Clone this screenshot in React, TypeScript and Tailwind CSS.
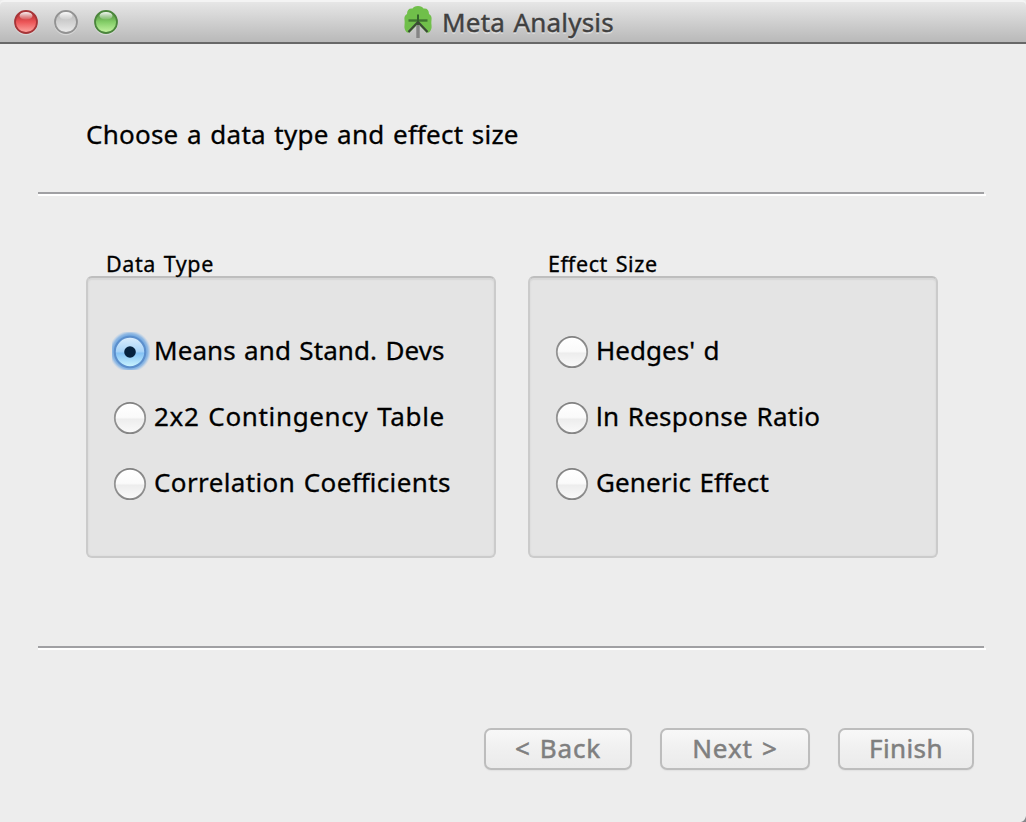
type RadioProps = { label: string; tracking: string; checked?: boolean };

function Radio({ label, tracking, checked = false }: RadioProps) {
  return (
    <div className="flex h-[66px] items-center">
      <svg className="ml-[-2px] mt-[2px] block h-10 w-10 shrink-0" viewBox="0 0 40 40">
        <defs>
          <linearGradient id="plain" x1="0" y1="0" x2="0" y2="1">
            <stop offset="0" stopColor="#fff" />
            <stop offset=".48" stopColor="#fafafa" />
            <stop offset=".54" stopColor="#ededed" />
            <stop offset="1" stopColor="#fafafa" />
          </linearGradient>
          <linearGradient id="blue" x1="0" y1="0" x2="0" y2="1">
            <stop offset="0" stopColor="#dceefd" />
            <stop offset=".48" stopColor="#a8d4f8" />
            <stop offset=".54" stopColor="#86c3f5" />
            <stop offset="1" stopColor="#cdf6ff" />
          </linearGradient>
          <linearGradient id="rim" x1="0" y1="0" x2="0" y2="1">
            <stop offset="0" stopColor="#808080" />
            <stop offset=".5" stopColor="#969696" />
            <stop offset="1" stopColor="#858585" />
          </linearGradient>
          <radialGradient id="halo" gradientUnits="userSpaceOnUse" cx="20" cy="19.5" r="21">
            <stop offset=".74" stopColor="#6aa3df" />
            <stop offset=".86" stopColor="#7fb0e3" stopOpacity=".8" />
            <stop offset="1" stopColor="#9cc4ec" stopOpacity="0" />
          </radialGradient>
        </defs>
        {checked && <path d="M2 0H40V38H2Z" fill="url(#halo)" />}
        <circle
          cx="20"
          cy="20"
          r="15.2"
          fill={checked ? "url(#blue)" : "url(#plain)"}
          stroke={checked ? "#5c8fcc" : "url(#rim)"}
          strokeWidth={checked ? 2 : 1.8}
        />
        {checked && <circle cx="20" cy="20" r="5.8" fill="#06223f" />}
      </svg>
      <span className={`-mt-[2px] ml-1 whitespace-nowrap text-[26px] leading-8 ${tracking}`}>{label}</span>
    </div>
  );
}

type GroupProps = { title: string; tracking: string; options: RadioProps[] };

function Group({ title, tracking, options }: GroupProps) {
  return (
    <section className="w-[410px]">
      <h2 className={`h-[24px] pl-5 text-[21.5px] leading-[24px] ${tracking}`}>{title}</h2>
      <div className="h-[282px] rounded-[6px] border-2 border-[#cbcbcb] border-t-[#bebebe] bg-[#e4e4e4] pl-6 pt-[40px] shadow-[inset_0_2px_1px_#d8d8d8,inset_0_0_2px_#d5d5d5]">
        {options.map((o) => (
          <Radio key={o.label} {...o} />
        ))}
      </div>
    </section>
  );
}

function Rule() {
  return (
    <div className="ml-[38px] w-[948px]">
      <div className="h-[2px] w-[946px] bg-[#a0a0a3]" />
      <div className="h-[2px] bg-white" />
    </div>
  );
}

function TrafficLight({ id, rim, top, mid, bottom }: { id: string; rim: string; top: string; mid: string; bottom: string }) {
  return (
    <svg className="block h-7 w-6" viewBox="0 0 24 28">
      <defs>
        <linearGradient id={id} x1="0" y1="0" x2="0" y2="1">
          <stop offset="0" stopColor={top} />
          <stop offset=".5" stopColor={mid} />
          <stop offset="1" stopColor={bottom} />
        </linearGradient>
        <linearGradient id={`${id}s`} x1="0" y1="0" x2="0" y2="1">
          <stop offset="0" stopColor="#fff" stopOpacity=".95" />
          <stop offset="1" stopColor="#fff" stopOpacity=".1" />
        </linearGradient>
      </defs>
      <circle cx="12" cy="15.5" r="11.8" fill="#fff" opacity=".35" />
      <circle cx="12" cy="14" r="11" fill={`url(#${id})`} stroke={rim} strokeWidth="1.8" />
      <ellipse cx="12" cy="7.8" rx="6.5" ry="3.8" fill={`url(#${id}s)`} />
    </svg>
  );
}

function LeafIcon() {
  return (
    <svg className="block h-8 w-[28px]" viewBox="0 0 28 32">
      <path
        d="M14 0C17 0 18.500 1 19.500 2.500C23 2 25 4 25 8C27 9 28 11 27.500 14C27.300 16 27.300 17 27.500 19C28 22 27 24.500 25.500 26C24.500 27 23 27 22 26L14 18L6 26C5 27 3.500 27 2.500 26C1 24.500 0 22 .5 19C.7 17 .7 16 .5 14C0 11 1 9 3 8C3 4 5 2 8.500 2.500C9.500 1 11 0 14 0Z"
        fill="#70bf4a"
      />
      <path d="M4.500 14.500H23.500" stroke="#3f7530" strokeWidth="2.400" />
      <path d="M14 8.500V19" stroke="#34632b" strokeWidth="2" />
      <path d="M14 16L4.500 26M14 16L23.500 26" stroke="#3b4a36" strokeWidth="2.200" fill="none" />
      <path d="M14 19V32" stroke="#858585" strokeWidth="3.400" />
    </svg>
  );
}

const dataTypes: RadioProps[] = [
  { label: "Means and Stand. Devs", tracking: "tracking-[0.08px]", checked: true },
  { label: "2x2 Contingency Table", tracking: "tracking-[0.65px]" },
  { label: "Correlation Coefficients", tracking: "tracking-[0.38px]" },
];

const effectSizes: RadioProps[] = [
  { label: "Hedges' d", tracking: "tracking-[0.05px]" },
  { label: "ln Response Ratio", tracking: "tracking-[0.25px]" },
  { label: "Generic Effect", tracking: "tracking-[0.12px]" },
];

const buttonBase =
  "h-[42px] rounded-[7px] border-2 border-[#bdbdbd] bg-linear-to-b from-[#f8f8f8] via-[#f0f0f0] to-[#ebebeb] pb-[2px] text-center text-[26px] leading-[36px] text-[#7f7f7f] shadow-[0_1px_1px_#e2e2e2] [-webkit-text-stroke:0.5px] [word-spacing:1.5px]";

export default function App() {
  return (
    <main className="relative h-[822px] w-[1026px] overflow-hidden bg-[#ededed] font-['Noto_Sans',sans-serif] text-black [-webkit-text-stroke:0.3px] [font-feature-settings:'liga'] [word-spacing:1.5px]">
      <header className="flex h-[44px] items-start rounded-t-[4px] border-b-2 border-[#686868] bg-linear-to-b from-[#e9e9e9] to-[#b9b9b9] shadow-[inset_0_2px_0_#f4f4f4]">
        <div className="flex w-[404px] gap-4 pl-[14px] pt-2">
          <TrafficLight id="close" rim="#a63538" top="#a52325" mid="#ec5557" bottom="#ffaaa5" />
          <TrafficLight id="minimize" rim="#929292" top="#b5b5b5" mid="#d0d0d0" bottom="#ededed" />
          <TrafficLight id="zoom" rim="#4b853c" top="#438033" mid="#83cd67" bottom="#c8f5a5" />
        </div>
        <div className="flex pt-[6px]">
          <LeafIcon />
          <h1 className="ml-[10px] whitespace-nowrap text-[26px] leading-8 tracking-[0.2px] text-[#404040] [-webkit-text-stroke:0.4px] [text-shadow:0_2px_0_#ffffff66]">Meta Analysis</h1>
        </div>
      </header>
      <p className="h-[148px] pl-[86px] pt-[74px] text-[26px] leading-8 tracking-[0.24px]">
        Choose a data type and effect size
      </p>
      <Rule />
      <div className="flex h-[450px] gap-8 pl-[86px] pt-[56px]">
        <Group title="Data Type" tracking="tracking-[0.6px]" options={dataTypes} />
        <Group title="Effect Size" tracking="tracking-[0.6px]" options={effectSizes} />
      </div>
      <Rule />
      <footer className="flex pl-[484px] pt-[78px]">
        <button className={`${buttonBase} w-[148px] tracking-[0.8px]`}>&lt; Back</button>
        <button className={`${buttonBase} ml-7 w-[150px] tracking-[0.9px]`}>Next &gt;</button>
        <button className={`${buttonBase} ml-7 w-[136px] tracking-[0.4px]`}>Finish</button>
      </footer>
      <svg className="absolute bottom-0 right-0 block h-1.5 w-1.5" viewBox="0 0 6 6">
        <path d="M6 0V6H1Q5 5 6 0Z" fill="#85868a" />
      </svg>
    </main>
  );
}
